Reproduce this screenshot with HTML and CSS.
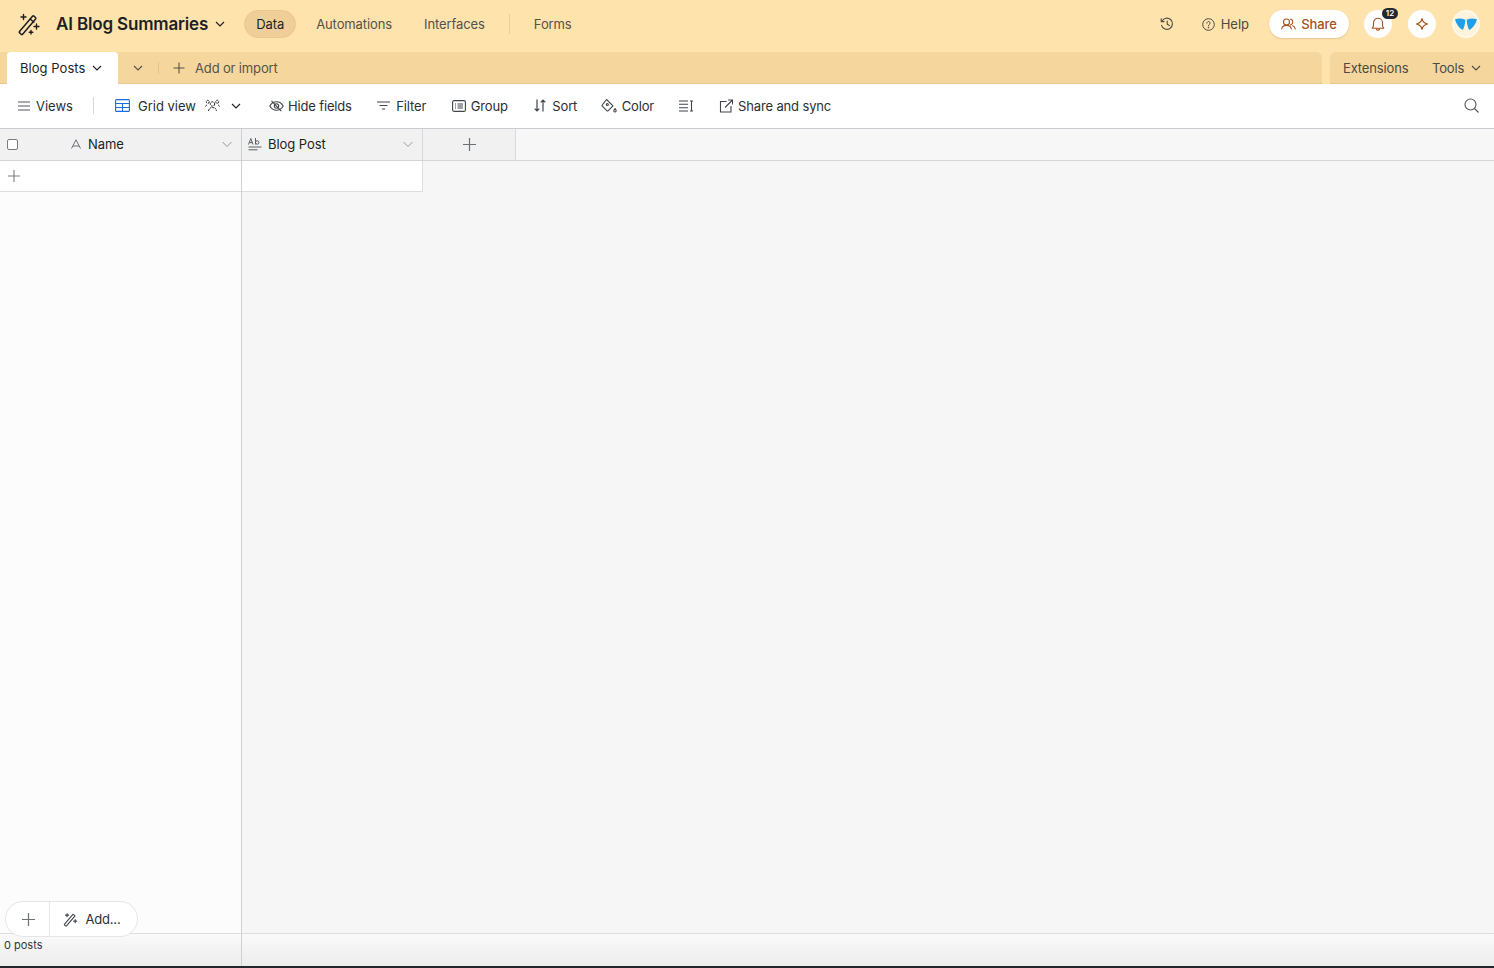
FILE: index.html
```html
<!DOCTYPE html>
<html lang="en">
<head>
    <meta charset="UTF-8">
    <meta name="viewport" content="width=device-width, initial-scale=1.0">
    <title>AI Blog Summaries</title>
    <link rel="stylesheet" href="styles.css">
</head>
<body>
<div class="app">
    <!-- top bar -->
    <header class="topbar">
        <svg class="base-icon" width="24" height="24" viewBox="0 0 24 24" fill="none" stroke="#1d1f25" stroke-width="1.5" stroke-linejoin="round" stroke-linecap="round">
            <path d="M2.500 19.500 15.500 4.200a1 1 0 0 1 1.400-.1l1.600 1.400a1 1 0 0 1 .1 1.400L5.600 22.200a1 1 0 0 1-1.400.1l-1.600-1.400a1 1 0 0 1-.1-1.400z"/>
            <path d="M13.200 7 16.800 10.200"/>
            <path d="M6.500 2.500v5M4 5h5M19.500 12v5M17 14.500h5M14 18.500v3.600M12.200 20.300h3.600" stroke-width="1.400"/>
        </svg>
        <span class="base-name">AI Blog Summaries</span>
        <svg class="base-caret" width="10" height="10" viewBox="0 0 10 10" fill="none" stroke="#1d1f25" stroke-width="1.1"><path d="M1 3l4 4 4-4"/></svg>
        <nav class="nav">
            <a class="nav-pill">Data</a>
            <a class="nav-link link-auto">Automations</a>
            <a class="nav-link link-inter">Interfaces</a>
            <span class="nav-sep"></span>
            <a class="nav-link">Forms</a>
        </nav>
        <div class="top-right">
            <svg class="history" width="14" height="14" viewBox="0 0 14 14" fill="none" stroke="#4c4a42" stroke-width="1.1" stroke-linecap="round" stroke-linejoin="round">
                <path d="M1.800 4.300A5.600 5.600 0 1 1 1.500 8.400"/><path d="M1.200 1.700v2.900h2.900"/><path d="M7.200 4v3.300l2.200 1.200"/>
            </svg>
            <span class="help">
                <svg width="13" height="13" viewBox="0 0 13 13" fill="none" stroke="#4c4a42" stroke-width="1"><circle cx="6.500" cy="6.500" r="5.800"/><path d="M4.900 5.100a1.600 1.600 0 1 1 2.400 1.400c-.5.3-.8.6-.8 1.200" stroke-linecap="round"/><circle cx="6.500" cy="9.500" r=".4" fill="#4c4a42"/></svg>
                Help
            </span>
            <button class="share-btn">
                <svg width="15" height="12" viewBox="0 0 15 12" fill="none" stroke="#a8521c" stroke-width="1.1" stroke-linecap="round"><circle cx="5.500" cy="4" r="3"/><path d="M.7 11c.4-2.400 2-3.600 4.800-3.600s4.400 1.200 4.800 3.600"/><path d="M9.600 1.100a3 3 0 0 1 0 5.800M11.600 7.800c1.500.5 2.400 1.600 2.700 3.200"/></svg>
                Share
            </button>
            <span class="round-btn bell">
                <svg width="14" height="15" viewBox="0 0 14 15" fill="none" stroke="#a8521c" stroke-width="1.1" stroke-linejoin="round"><path d="M1.200 11.200c1-.9 1.300-1.800 1.300-3.200V5.800a4.500 4.500 0 0 1 9 0V8c0 1.400.3 2.300 1.300 3.200z"/><path d="M5.300 11.400a1.700 1.700 0 0 0 3.400 0"/></svg>
                <span class="badge">12</span>
            </span>
            <span class="round-btn">
                <svg width="14" height="14" viewBox="0 0 14 14" fill="none" stroke="#a8521c" stroke-width="1.2" stroke-linejoin="round"><path d="M7 1.500c.5 3 2 4.700 5.500 5.500-3.500.8-5 2.500-5.500 5.500C6.500 9.500 5 7.800 1.500 7 5 6.200 6.500 4.500 7 1.500z"/></svg>
            </span>
            <span class="avatar">
                <svg width="22" height="12" viewBox="0 0 22 12"><path d="M0 1.200c3.800-1 7.500-.8 10.300.6-.2 4.300-1 7.600-2.500 10.200C4 10 1.300 6.300 0 1.200zM22 1.200c-3.800-1-7.500-.8-10.300.6.2 4.300 1 7.600 2.500 10.200C18 10 20.700 6.300 22 1.200z" fill="#1f9fe8"/></svg>
            </span>
        </div>
    </header>

    <!-- table tabs -->
    <div class="tabbar">
        <div class="tabs-main">
            <div class="tab">
                Blog Posts
                <svg width="10" height="10" viewBox="0 0 10 10" fill="none" stroke="#1d1f25" stroke-width="1.1"><path d="M1 3l4 4 4-4"/></svg>
            </div>
            <svg class="tabs-caret" width="10" height="10" viewBox="0 0 10 10" fill="none" stroke="#55524a" stroke-width="1.1"><path d="M1 3l4 4 4-4"/></svg>
            <span class="tabs-sep"></span>
            <span class="add-import">
                <svg width="12" height="12" viewBox="0 0 12 12" stroke="#55524a" stroke-width="1.1"><path d="M6 .5v11M.5 6h11"/></svg>
                Add or import
            </span>
        </div>
        <div class="tabs-side">
            <span>Extensions</span>
            <span class="tools">
                Tools
                <svg width="10" height="10" viewBox="0 0 10 10" fill="none" stroke="#4c4a42" stroke-width="1.1"><path d="M1 3l4 4 4-4"/></svg>
            </span>
        </div>
    </div>

    <!-- view toolbar -->
    <div class="toolbar">
        <span class="tool tool-views">
            <svg width="12" height="10" viewBox="0 0 12 10" stroke="#55565c" stroke-width="1.2"><path d="M0 1h12M0 5h12M0 9h12"/></svg>
            Views
        </span>
        <span class="tool-sep"></span>
        <span class="tool tool-grid">
            <svg width="15" height="13" viewBox="0 0 15 13" fill="none" stroke="#166ee1" stroke-width="1.1"><rect x=".6" y=".6" width="13.800" height="11.800" rx="1"/><path d="M.6 4.500h13.800M.6 8.500h13.800M7.500 4.500v7.900"/></svg>
            Grid view
            <svg class="people" width="15" height="13" viewBox="0 0 15 13" fill="none" stroke="#1d1f25" stroke-width="1" stroke-dasharray="2 .7"><circle cx="7.500" cy="5" r="2.200"/><path d="M3.500 12c.4-2.400 1.800-3.500 4-3.500s3.600 1.100 4 3.500"/><circle cx="2.800" cy="2.800" r="1.500"/><circle cx="12.200" cy="2.800" r="1.500"/><path d="M.5 7.500c.3-1 1-1.600 2-1.700M14.500 7.500c-.3-1-1-1.600-2-1.700"/></svg>
            <svg class="grid-caret" width="10" height="10" viewBox="0 0 10 10" fill="none" stroke="#1d1f25" stroke-width="1.1"><path d="M1 3l4 4 4-4"/></svg>
        </span>
        <span class="tool tool-tight">
            <svg width="15" height="12" viewBox="0 0 15 12" fill="none" stroke="#41454d" stroke-width="1.1"><path d="M.8 6c1.600-2.800 3.800-4.200 6.700-4.200S12.600 3.200 14.200 6c-1.600 2.800-3.800 4.200-6.700 4.200S2.400 8.800.8 6z"/><circle cx="7.500" cy="6" r="2.200"/><path d="M2.500.8l9.800 10.400"/></svg>
            Hide fields
        </span>
        <span class="tool tool-wide">
            <svg width="13" height="9" viewBox="0 0 13 9" stroke="#41454d" stroke-width="1.1"><path d="M0 1h13M2.500 4.500h8M5 8h3"/></svg>
            Filter
        </span>
        <span class="tool">
            <svg width="14" height="12" viewBox="0 0 14 12" fill="none" stroke="#41454d" stroke-width="1.1"><rect x=".6" y=".6" width="12.800" height="10.800" rx="1.500"/><path d="M3 4h1M3 6h1M3 8h1M5.500 4h5.500M5.500 6h5.500M5.500 8h5.500"/></svg>
            Group
        </span>
        <span class="tool tool-wide tool-sort">
            <svg width="12" height="13" viewBox="0 0 12 13" fill="none" stroke="#41454d" stroke-width="1.2"><path d="M3 .5v11.500M.7 9.700 3 12l2.300-2.300M9 12.500V1M6.700 3.300 9 1l2.300 2.300"/></svg>
            Sort
        </span>
        <span class="tool tool-color">
            <svg width="16" height="15" viewBox="0 0 16 15" fill="none" stroke="#41454d" stroke-width="1.1" stroke-linejoin="round"><path d="M5.500 1.500 12 7.800 7.200 12.700a1 1 0 0 1-1.400 0L1.300 8.200a1 1 0 0 1 0-1.400z"/><circle cx="6.300" cy="6.500" r="1"/><path d="M14 10.500c.7 1 1.200 1.700 1.200 2.300a1.200 1.200 0 0 1-2.400 0c0-.6.500-1.300 1.200-2.300z"/></svg>
            Color
        </span>
        <span class="tool tool-height">
            <svg width="14" height="12" viewBox="0 0 14 12" stroke="#41454d" stroke-width="1.1" fill="none"><path d="M0 1h9M0 4.300h9M0 7.700h9M0 11h9M12.500 1.500v9M11 1h3M11 11h3"/></svg>
        </span>
        <span class="tool">
            <svg width="14" height="14" viewBox="0 0 14 14" fill="none" stroke="#41454d" stroke-width="1.1"><path d="M7.500 2.500H1.500v10.500H12V7"/><path d="M6 8.500 13 1.500M9 1h4.500v4.500"/></svg>
            Share and sync
        </span>
        <svg class="search" width="15" height="15" viewBox="0 0 15 15" fill="none" stroke="#55565c" stroke-width="1.1"><circle cx="6.500" cy="6.500" r="5.500"/><path d="M10.500 10.500 14.500 14.500"/></svg>
    </div>

    <!-- grid -->
    <div class="grid">
        <div class="pane-left">
            <div class="head-row">
                <span class="checkbox"></span>
                <svg class="name-icon" width="10" height="10" viewBox="0 0 10 10" fill="none" stroke="#6b6f76" stroke-width="1"><path d="M.5 9.500 5 .8l4.500 8.700M2 7h6"/></svg>
                <span class="field-name">Name</span>
                <svg class="field-caret" width="10" height="10" viewBox="0 0 10 10" fill="none" stroke="#8b8e94" stroke-width=".9"><path d="M.5 3l4.500 4.500L9.500 3"/></svg>
            </div>
            <div class="row-left">
                <svg width="12" height="12" viewBox="0 0 12 12" stroke="#7b7e84" stroke-width="1.1"><path d="M6 0v12M0 6h12"/></svg>
            </div>
            <div class="left-fill"></div>
            <div class="add-bar">
                <span class="add-plus">
                    <svg width="13" height="13" viewBox="0 0 13 13" stroke="#6b6f76" stroke-width="1.2"><path d="M6.500 0v13M0 6.500h13"/></svg>
                </span>
                <span class="add-more">
                    <svg width="15" height="15" viewBox="0 0 24 24" fill="none" stroke="#41454d" stroke-width="1.8" stroke-linejoin="round" stroke-linecap="round"><path d="M2.500 19.500 15.500 4.200a1 1 0 0 1 1.400-.1l1.600 1.400a1 1 0 0 1 .1 1.400L5.600 22.200a1 1 0 0 1-1.400.1l-1.600-1.400a1 1 0 0 1-.1-1.400z"/><path d="M6.500 2.500v5M4 5h5M19.500 12v5M17 14.500h5"/></svg>
                    Add...
                </span>
            </div>
            <div class="foot-left">0 posts</div>
        </div>
        <div class="pane-right">
            <div class="head-row head-right">
                <div class="col-post">
                    <svg width="14" height="14" viewBox="0 0 14 14" fill="none" stroke="#5c6068" stroke-width="1"><path d="M.5 7.500 2.800 1.500 5 7.500M1.300 5.600h3M7.500 1v6.500M7.500 5.500a1.700 1.700 0 1 1 3.400 0 1.700 1.700 0 0 1-3.400 0zM.5 10h13M.5 12.800h9"/></svg>
                    <span class="field-name">Blog Post</span>
                    <svg class="field-caret" width="10" height="10" viewBox="0 0 10 10" fill="none" stroke="#8b8e94" stroke-width=".9"><path d="M.5 3l4.500 4.500L9.500 3"/></svg>
                </div>
                <div class="col-add">
                    <svg width="13" height="13" viewBox="0 0 13 13" stroke="#6b6f76" stroke-width="1.2"><path d="M6.500 0v13M0 6.500h13"/></svg>
                </div>
            </div>
            <div class="row-right"></div>
            <div class="right-fill"></div>
            <div class="foot-right"></div>
        </div>
    </div>
    <div class="bottom-edge"></div>
</div>
</body>
</html>
```

FILE: styles.css
```css
*{padding: 0; margin: 0; box-sizing: border-box;}
html, body {height: 100%; overflow: hidden;}
body {font-family: "Inter", "Liberation Sans", sans-serif; font-size: 13px; color: #1d1f25;}
svg {display: block; flex: none;}

.app {display: flex; flex-direction: column; height: 968px; background: #ffe3ad;}

/* top bar */
.topbar {display: flex; align-items: center; height: 52px; flex: none; padding: 0 0 4px 17px;}
.base-name {margin-left: 15px; font-size: 17px; font-weight: 600; letter-spacing: -0.16px; white-space: nowrap;}
.base-caret {margin-left: 7px;}
.nav {display: flex; align-items: center; margin-left: 19px; color: #55524a; letter-spacing: -0.1px;}
.nav-pill {display: flex; align-items: center; justify-content: center; width: 52px; height: 28px; border-radius: 14px; background: #efcf97; border: 1px solid #e8c88e; color: #1d1f25;}
.nav-link {white-space: nowrap;}
.link-auto {margin-left: 20px;}
.link-inter {margin-left: 32px;}
.nav-sep {width: 1px; height: 20px; background: #ecd097; margin: 0 24px;}
.top-right {display: flex; align-items: center; margin-left: auto; padding-right: 14px;}
.history {margin-right: 28px;}
.help {display: flex; align-items: center; gap: 6px; color: #4c4a42; margin-right: 20px;}
.share-btn {display: flex; align-items: center; gap: 5px; width: 80px; height: 28px; justify-content: center; border: none; border-radius: 14px; background: #fff; color: #a8521c; font: 500 13px "Inter", "Liberation Sans", sans-serif; letter-spacing: -0.1px; box-shadow: 0 1px 2px rgba(120, 80, 20, 0.2); margin-right: 15px;}
.round-btn {position: relative; display: flex; align-items: center; justify-content: center; width: 28px; height: 28px; border-radius: 50%; background: #fff; margin-right: 16px;}
.badge {position: absolute; top: -2px; left: 18px; width: 16px; height: 11px; border-radius: 6px; background: #25282e; color: #fff; font-size: 8px; font-weight: 600; line-height: 11px; text-align: center;}
.avatar {display: flex; align-items: center; justify-content: center; width: 28px; height: 28px; border-radius: 50%; background: #fff3dc; border: 1px solid #fff;}

/* tabs */
.tabbar {display: flex; height: 32px; flex: none; gap: 8px;}
.tabs-main {display: flex; align-items: center; flex: 1; background: #f5d79e; border-radius: 0 6px 0 0; padding-left: 7px; color: #55524a; box-shadow: inset 0 -1px 0 #e8c88e;}
.tab {display: flex; align-items: center; gap: 7px; width: 111px; height: 32px; padding-left: 13px; background: #fff; border-radius: 4px 4px 0 0; color: #1d1f25; letter-spacing: 0.05px;}
.tabs-caret {margin-left: 15px;}
.tabs-sep {width: 1px; height: 12px; background: #e3c48a; margin-left: 15px;}
.add-import {display: flex; align-items: center; gap: 10px; margin-left: 14px; white-space: nowrap; letter-spacing: -0.15px;}
.tabs-side {display: flex; align-items: center; gap: 23.5px; width: 164px; padding-left: 13px; background: #f5d79e; border-radius: 6px 0 0 0; color: #4c4a42; box-shadow: inset 0 -1px 0 #e8c88e; letter-spacing: -0.15px;}
.tools {display: flex; align-items: center; gap: 7px;}

/* toolbar */
.toolbar {display: flex; align-items: center; gap: 25.5px; height: 45px; flex: none; padding: 0 15px 1px 18px; background: #fff; border-bottom: 1px solid #c9cbd0;}
.tool {display: flex; align-items: center; gap: 5px; white-space: nowrap; color: #2b2e35; letter-spacing: -0.15px;}
.tool-views {gap: 6px; letter-spacing: 0;}
.tool-sep {width: 1px; height: 17px; background: #d5d7db; margin: 0 -4.5px 0 -5.5px;}
.tool-grid {gap: 8px; margin-right: 2.5px; letter-spacing: 0;}
.people {margin-left: 1px;}
.grid-caret {margin-left: 3px;}
.tool-tight {gap: 4px;}
.tool-wide {gap: 6px;}
.tool-sort {margin: 0 -2px 0 1px;}
.tool-color {margin-right: -1px;}
.tool-height {margin-right: 1px;}
.search {margin-left: auto;}

/* grid */
.grid {display: flex; flex: 1; min-height: 0; background: #f6f6f6;}
.pane-left {position: relative; display: flex; flex-direction: column; width: 242px; flex: none; background: #fcfcfc; border-right: 1px solid #cfd0d3;}
.pane-right {display: flex; flex-direction: column; flex: 1;}
.head-row {display: flex; align-items: center; height: 32px; flex: none; padding-bottom: 1px; background: #f1f1f1; border-bottom: 1px solid #d4d5d8;}
.checkbox {width: 11px; height: 11px; margin-left: 7px; border: 1px solid #777b82; border-radius: 2px; background: #fff;}
.name-icon {margin-left: 53px;}
.field-name {margin-left: 7px; white-space: nowrap; letter-spacing: -0.05px;}
.field-caret {margin-left: auto; margin-right: 9px;}
.head-right {background: #f7f7f7; padding-bottom: 0;}
.col-post {display: flex; align-items: center; width: 181px; height: 100%; padding: 0 0 1px 6px; background: #f1f1f1; border-right: 1px solid #d8d9dc;}
.col-post .field-name {margin-left: 6px;}
.col-add {display: flex; align-items: center; justify-content: center; width: 93px; height: 100%; background: #f1f1f1; border-right: 1px solid #d8d9dc;}
.row-left {display: flex; align-items: center; height: 31px; flex: none; padding: 0 0 1px 8px; background: #fff; border-bottom: 1px solid #dddee0;}
.row-right {width: 181px; height: 31px; flex: none; background: #fff; border-right: 1px solid #dddee0; border-bottom: 1px solid #dddee0;}
.left-fill, .right-fill {flex: 1;}
.foot-left, .foot-right {height: 33px; flex: none; border-top: 1px solid #dddee0; background: linear-gradient(#fafafa, #ececec);}
.foot-left {padding: 4px 0 0 4px; font-size: 11px; line-height: 14px; color: #33363c;}

/* floating add button, sits over the footer line */
.add-bar {position: absolute; left: 4.5px; bottom: 29px; display: flex; width: 133px; height: 36px; background: #fff; border: 1px solid #e4e5e7; border-radius: 18px; z-index: 1;}
.add-plus {display: flex; align-items: center; justify-content: center; width: 44px; padding-left: 2px; border-right: 1px solid #e4e5e7;}
.add-more {display: flex; align-items: center; gap: 8px; padding-left: 13px; color: #2b2e35; letter-spacing: -0.2px;}

.bottom-edge {height: 2px; flex: none; background: #23262b;}
```
